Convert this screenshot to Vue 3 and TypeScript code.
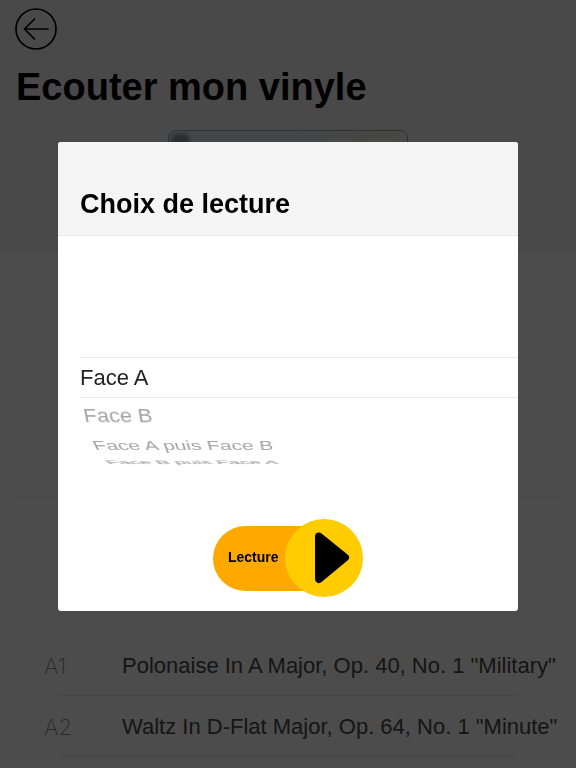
<script setup lang="ts">
import { ref } from 'vue'

interface Track {
  position: string
  title: string
}

const tracks: Track[] = [
  { position: 'A1', title: 'Polonaise In A Major, Op. 40, No. 1 "Military"' },
  { position: 'A2', title: 'Waltz In D-Flat Major, Op. 64, No. 1 "Minute"' },
]

const choices: string[] = ['Face A', 'Face B', 'Face A puis Face B', 'Face B puis Face A']
const selected = ref(0)

// The choices sit on a drum: each step turns it by stepAngle degrees.
const stepAngle = 22
const drumRadius = 103

function placeOnDrum(index: number) {
  const angle = (selected.value - index) * stepAngle
  return {
    transform: `translateZ(-${drumRadius}px) rotateX(${angle}deg) translateZ(${drumRadius}px)`,
    visibility: Math.abs(angle) < 80 ? ('visible' as const) : ('hidden' as const),
  }
}
</script>

<template>
  <div class="page">
    <header class="page-header">
      <button class="back" type="button" aria-label="Retour">
        <svg viewBox="0 0 42 42" aria-hidden="true">
          <circle cx="21" cy="21" r="20" />
          <path d="M33 21H9.5M19.5 11L9.5 21l10 10" />
        </svg>
      </button>
      <h1>Ecouter mon vinyle</h1>
    </header>

    <div class="cover-band">
      <div class="cover">
        <span class="cover-mark"></span>
      </div>
    </div>

    <div class="details"></div>

    <ul class="tracks">
      <li v-for="track in tracks" :key="track.position">
        <div class="track">
          <span class="track-position">{{ track.position }}</span>
          <span class="track-title">{{ track.title }}</span>
        </div>
      </li>
    </ul>

    <div class="overlay">
      <form class="dialog" role="dialog" aria-modal="true" aria-labelledby="dialog-title" @submit.prevent>
        <header class="dialog-header">
          <h2 id="dialog-title">Choix de lecture</h2>
        </header>
        <div class="picker" role="radiogroup" aria-labelledby="dialog-title">
          <div class="drum">
            <label
              v-for="(choice, index) in choices"
              :key="choice"
              class="choice"
              :class="{ active: index === selected, far: Math.abs(index - selected) > 2 }"
              :style="placeOnDrum(index)"
            >
              <input v-model="selected" type="radio" name="side" :value="index" />
              <span class="choice-text">{{ choice }}</span>
            </label>
          </div>
        </div>
        <div class="dialog-actions">
          <button class="play" type="submit">
            <span class="play-label">Lecture</span>
            <span class="play-disc">
              <svg viewBox="0 0 78 78" aria-hidden="true">
                <path d="M34 17.500L60 38.500L34 60Z" />
              </svg>
            </span>
          </button>
        </div>
      </form>
    </div>
  </div>
</template>

<style>
body {
  margin: 0;
  background: #ffffff;
}
</style>

<style scoped>
.page {
  min-height: 100vh;
  overflow: hidden;
  font-family: "Liberation Sans", Arial, sans-serif;
  color: #000000;
  background: #ffffff;
  box-sizing: border-box;
}

button {
  padding: 0;
  border: 0;
  background: none;
  font: inherit;
  color: inherit;
  cursor: pointer;
}

.page-header {
  padding: 8px 16px 14px;
  background: #f5f5f5;
  border-bottom: 1px solid #e6e6e6;
}

.back {
  display: block;
  width: 42px;
  height: 42px;
  margin-left: -1px;
}

.back svg {
  display: block;
  width: 42px;
  height: 42px;
  fill: none;
  stroke: #000000;
  stroke-width: 1.7;
  stroke-linecap: round;
  stroke-linejoin: round;
}

h1 {
  margin: 14px 0 0;
  font-size: 38px;
  line-height: 46px;
  font-weight: 700;
}

.cover-band {
  display: flex;
  justify-content: center;
  padding: 5px 0 2px;
  background: #f5f5f5;
}

.cover {
  width: 240px;
  height: 120px;
  box-sizing: border-box;
  padding: 3px;
  border: 1px solid #a4a8ac;
  border-radius: 7px;
  background: linear-gradient(90deg, #e2eaf0, #e4ecf2 50%, #eeeee4 90%, #f0f0f0);
}

.cover-mark {
  display: block;
  width: 17px;
  height: 12px;
  border-radius: 4px;
  background: #8496a2;
  filter: blur(2px);
}

.details {
  height: 246px;
  margin: 0 16px;
  border-bottom: 1px solid #eeeeee;
}

.tracks {
  margin: 0;
  padding: 136px 0 0;
  list-style: none;
}

.tracks li::after {
  content: "";
  display: block;
  height: 1px;
  margin: 0 58px;
  background: #e8e8e8;
}

.track {
  display: grid;
  grid-template-columns: 78px 1fr;
  align-items: center;
  height: 58px;
  padding: 2px 0 0 44px;
  font-size: 22px;
  line-height: 28px;
  white-space: nowrap;
}

.track-position {
  font-family: Inter, "Liberation Sans", sans-serif;
  font-weight: 200;
  color: #8c8c8c;
}

.track-title {
  color: #484848;
}

.overlay {
  position: fixed;
  inset: 0;
  padding: 142px 58px 0;
  background: rgba(0, 0, 0, 0.7);
}

.dialog {
  overflow: hidden;
  border-radius: 3px;
  background: #ffffff;
}

.dialog-header {
  padding: 46px 22px 15px;
  background: #f5f5f5;
  border-bottom: 1px solid #e8e8e8;
}

h2 {
  margin: 0;
  font-size: 27px;
  line-height: 32px;
  font-weight: 700;
}

.picker {
  padding: 121px 0;
  margin-left: 22px;
  perspective: 540px;
  perspective-origin: 60% 50%;
}

.drum {
  display: grid;
  align-items: center;
  height: 39px;
  border-top: 1px solid #ebebeb;
  border-bottom: 1px solid #ebebeb;
  transform-style: preserve-3d;
}

.choice {
  grid-area: 1 / 1;
  position: relative;
  font-size: 22px;
  line-height: 28px;
  color: #a4a4a4;
  white-space: nowrap;
  cursor: pointer;
  transition: transform 0.25s ease;
}

.choice.active {
  color: #222222;
}

.choice.far .choice-text {
  display: inline-block;
  color: #8c8c8c;
  filter: blur(0.8px);
}

.choice input {
  position: absolute;
  inset: 0;
  width: 100%;
  margin: 0;
  opacity: 0;
  cursor: pointer;
}

.dialog-actions {
  display: flex;
  justify-content: center;
  padding: 0 0 14px;
}

.play {
  display: flex;
  align-items: center;
}

.play-label {
  box-sizing: border-box;
  width: 112px;
  padding: 0 0 3px 15px;
  border-radius: 33px 0 0 33px;
  background: #ffa800;
  font-size: 14px;
  line-height: 62px;
  font-weight: 700;
  text-align: left;
}

.play-disc {
  width: 78px;
  height: 78px;
  margin-left: -40px;
  border-radius: 50%;
  background: #ffcc00;
}

.play-disc svg {
  display: block;
  width: 78px;
  height: 78px;
  fill: #000000;
  stroke: #000000;
  stroke-width: 8;
  stroke-linejoin: round;
}
</style>
